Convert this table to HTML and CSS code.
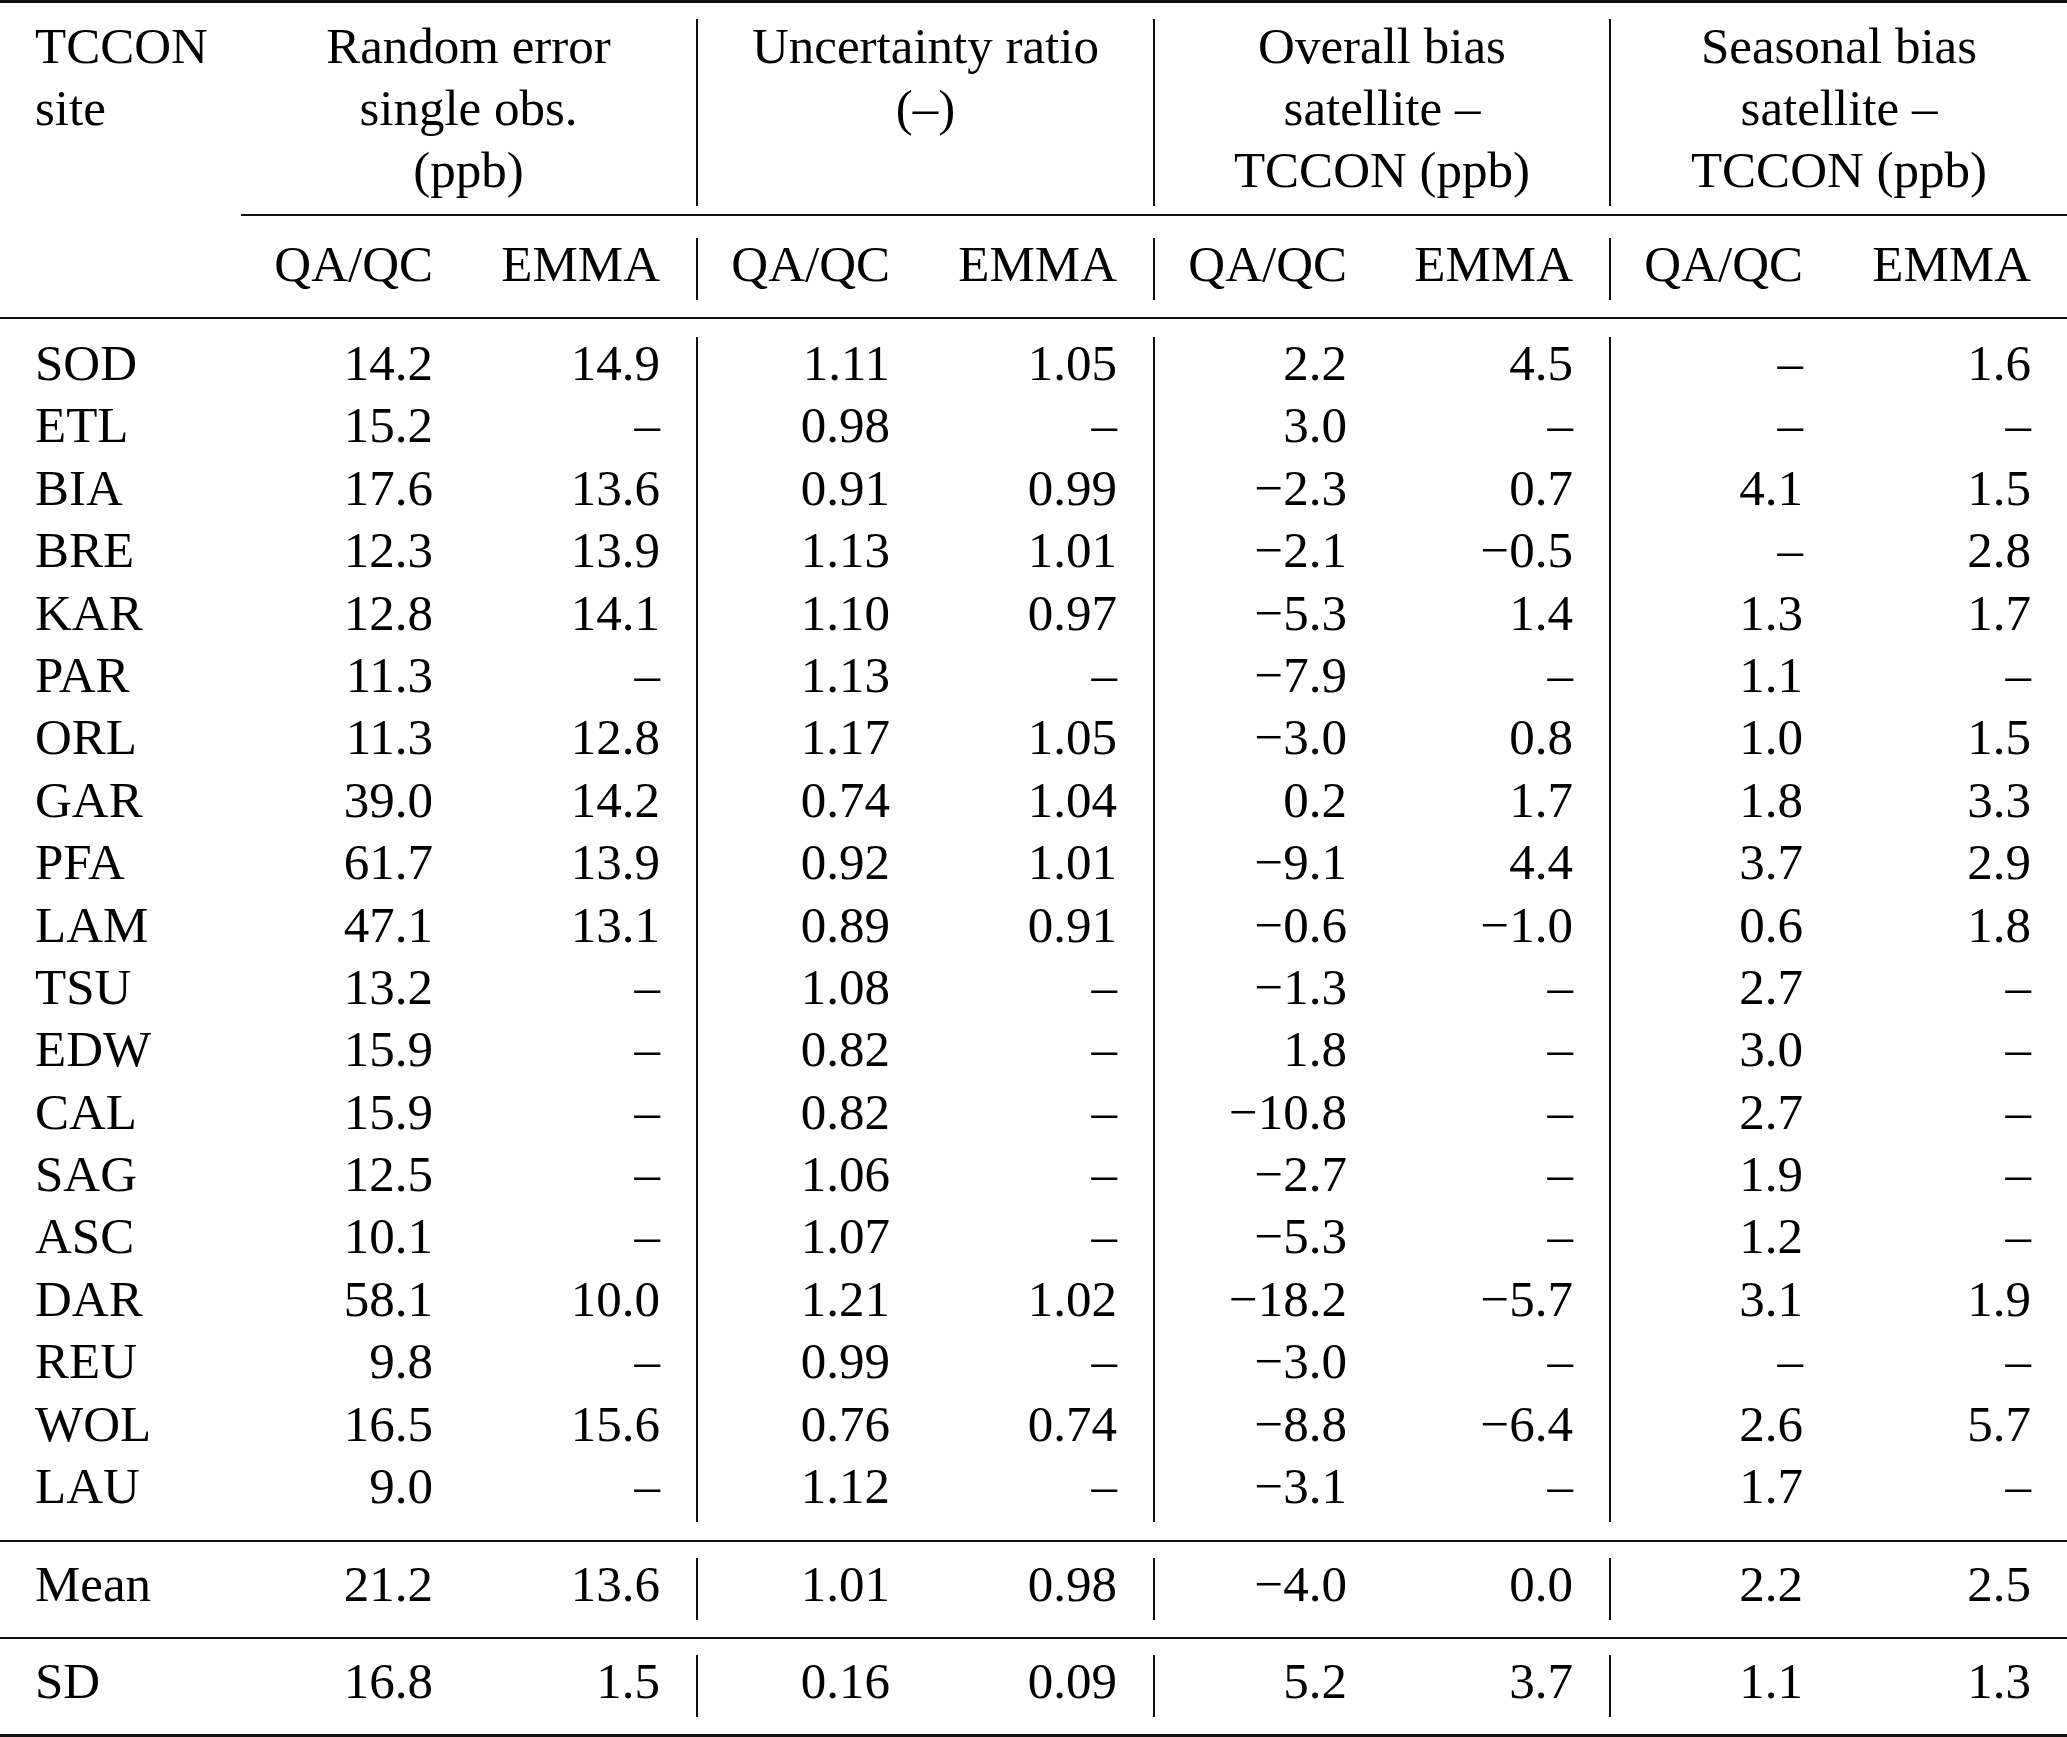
FILE: index.html
```html
<!DOCTYPE html>
<html lang="en">
<head>
<meta charset="utf-8">
<title>TCCON comparison table</title>
<link rel="stylesheet" href="styles.css">
</head>
<body>
<div class="table">
  <div class="band head">
    <div class="cell hcell site"><div class="txt">TCCON<br>site</div></div>
    <div class="cell hcell grp sep"><div class="txt">Random error<br>single obs.<br>(ppb)</div></div>
    <div class="cell hcell grp sep"><div class="txt">Uncertainty ratio<br>(–)</div></div>
    <div class="cell hcell grp sep"><div class="txt">Overall bias<br>satellite –<br>TCCON (ppb)</div></div>
    <div class="cell hcell grp"><div class="txt">Seasonal bias<br>satellite –<br>TCCON (ppb)</div></div>
  </div>
  <div class="cmid"></div>
  <div class="band sub">
    <div class="cell site"></div>
    <div class="cell num">QA/QC</div><div class="cell num sep">EMMA</div>
    <div class="cell num">QA/QC</div><div class="cell num sep">EMMA</div>
    <div class="cell num">QA/QC</div><div class="cell num sep">EMMA</div>
    <div class="cell num">QA/QC</div><div class="cell num">EMMA</div>
  </div>
  <div class="band body">
    <div class="cell site">SOD</div><div class="cell num">14.2</div><div class="cell num sep">14.9</div><div class="cell num">1.11</div><div class="cell num sep">1.05</div><div class="cell num">2.2</div><div class="cell num sep">4.5</div><div class="cell num">–</div><div class="cell num">1.6</div>
    <div class="cell site">ETL</div><div class="cell num">15.2</div><div class="cell num sep">–</div><div class="cell num">0.98</div><div class="cell num sep">–</div><div class="cell num">3.0</div><div class="cell num sep">–</div><div class="cell num">–</div><div class="cell num">–</div>
    <div class="cell site">BIA</div><div class="cell num">17.6</div><div class="cell num sep">13.6</div><div class="cell num">0.91</div><div class="cell num sep">0.99</div><div class="cell num">−2.3</div><div class="cell num sep">0.7</div><div class="cell num">4.1</div><div class="cell num">1.5</div>
    <div class="cell site">BRE</div><div class="cell num">12.3</div><div class="cell num sep">13.9</div><div class="cell num">1.13</div><div class="cell num sep">1.01</div><div class="cell num">−2.1</div><div class="cell num sep">−0.5</div><div class="cell num">–</div><div class="cell num">2.8</div>
    <div class="cell site">KAR</div><div class="cell num">12.8</div><div class="cell num sep">14.1</div><div class="cell num">1.10</div><div class="cell num sep">0.97</div><div class="cell num">−5.3</div><div class="cell num sep">1.4</div><div class="cell num">1.3</div><div class="cell num">1.7</div>
    <div class="cell site">PAR</div><div class="cell num">11.3</div><div class="cell num sep">–</div><div class="cell num">1.13</div><div class="cell num sep">–</div><div class="cell num">−7.9</div><div class="cell num sep">–</div><div class="cell num">1.1</div><div class="cell num">–</div>
    <div class="cell site">ORL</div><div class="cell num">11.3</div><div class="cell num sep">12.8</div><div class="cell num">1.17</div><div class="cell num sep">1.05</div><div class="cell num">−3.0</div><div class="cell num sep">0.8</div><div class="cell num">1.0</div><div class="cell num">1.5</div>
    <div class="cell site">GAR</div><div class="cell num">39.0</div><div class="cell num sep">14.2</div><div class="cell num">0.74</div><div class="cell num sep">1.04</div><div class="cell num">0.2</div><div class="cell num sep">1.7</div><div class="cell num">1.8</div><div class="cell num">3.3</div>
    <div class="cell site">PFA</div><div class="cell num">61.7</div><div class="cell num sep">13.9</div><div class="cell num">0.92</div><div class="cell num sep">1.01</div><div class="cell num">−9.1</div><div class="cell num sep">4.4</div><div class="cell num">3.7</div><div class="cell num">2.9</div>
    <div class="cell site">LAM</div><div class="cell num">47.1</div><div class="cell num sep">13.1</div><div class="cell num">0.89</div><div class="cell num sep">0.91</div><div class="cell num">−0.6</div><div class="cell num sep">−1.0</div><div class="cell num">0.6</div><div class="cell num">1.8</div>
    <div class="cell site">TSU</div><div class="cell num">13.2</div><div class="cell num sep">–</div><div class="cell num">1.08</div><div class="cell num sep">–</div><div class="cell num">−1.3</div><div class="cell num sep">–</div><div class="cell num">2.7</div><div class="cell num">–</div>
    <div class="cell site">EDW</div><div class="cell num">15.9</div><div class="cell num sep">–</div><div class="cell num">0.82</div><div class="cell num sep">–</div><div class="cell num">1.8</div><div class="cell num sep">–</div><div class="cell num">3.0</div><div class="cell num">–</div>
    <div class="cell site">CAL</div><div class="cell num">15.9</div><div class="cell num sep">–</div><div class="cell num">0.82</div><div class="cell num sep">–</div><div class="cell num">−10.8</div><div class="cell num sep">–</div><div class="cell num">2.7</div><div class="cell num">–</div>
    <div class="cell site">SAG</div><div class="cell num">12.5</div><div class="cell num sep">–</div><div class="cell num">1.06</div><div class="cell num sep">–</div><div class="cell num">−2.7</div><div class="cell num sep">–</div><div class="cell num">1.9</div><div class="cell num">–</div>
    <div class="cell site">ASC</div><div class="cell num">10.1</div><div class="cell num sep">–</div><div class="cell num">1.07</div><div class="cell num sep">–</div><div class="cell num">−5.3</div><div class="cell num sep">–</div><div class="cell num">1.2</div><div class="cell num">–</div>
    <div class="cell site">DAR</div><div class="cell num">58.1</div><div class="cell num sep">10.0</div><div class="cell num">1.21</div><div class="cell num sep">1.02</div><div class="cell num">−18.2</div><div class="cell num sep">−5.7</div><div class="cell num">3.1</div><div class="cell num">1.9</div>
    <div class="cell site">REU</div><div class="cell num">9.8</div><div class="cell num sep">–</div><div class="cell num">0.99</div><div class="cell num sep">–</div><div class="cell num">−3.0</div><div class="cell num sep">–</div><div class="cell num">–</div><div class="cell num">–</div>
    <div class="cell site">WOL</div><div class="cell num">16.5</div><div class="cell num sep">15.6</div><div class="cell num">0.76</div><div class="cell num sep">0.74</div><div class="cell num">−8.8</div><div class="cell num sep">−6.4</div><div class="cell num">2.6</div><div class="cell num">5.7</div>
    <div class="cell site">LAU</div><div class="cell num">9.0</div><div class="cell num sep">–</div><div class="cell num">1.12</div><div class="cell num sep">–</div><div class="cell num">−3.1</div><div class="cell num sep">–</div><div class="cell num">1.7</div><div class="cell num">–</div>
  </div>
  <div class="band foot">
    <div class="cell site">Mean</div><div class="cell num">21.2</div><div class="cell num sep">13.6</div><div class="cell num">1.01</div><div class="cell num sep">0.98</div><div class="cell num">−4.0</div><div class="cell num sep">0.0</div><div class="cell num">2.2</div><div class="cell num">2.5</div>
  </div>
  <div class="band foot last">
    <div class="cell site">SD</div><div class="cell num">16.8</div><div class="cell num sep">1.5</div><div class="cell num">0.16</div><div class="cell num sep">0.09</div><div class="cell num">5.2</div><div class="cell num sep">3.7</div><div class="cell num">1.1</div><div class="cell num">1.3</div>
  </div>
</div>
</body>
</html>
```

FILE: styles.css
```css
* {
  box-sizing: border-box;
  margin: 0;
  padding: 0;
}

html, body {
  background: #ffffff;
}

body {
  margin: 0;
  color: #000000;
  font-family: "Liberation Serif", "Times New Roman", serif;
  font-size: 51px;
}

.table {
  width: 2067px;
}

.band {
  display: grid;
  grid-template-columns: 241px 228px 229px 228px 229px 228px 228px 228px 228px;
}

.head {
  border-top: 3px solid #111;
  padding: 16px 0 7.8px;
}

.cmid {
  margin-left: 241px;
  border-top: 2px solid #111;
}

.sub {
  padding: 22px 0 16.6px;
}

.body {
  border-top: 2px solid #111;
  padding: 18px 0 17.4px;
}

.foot {
  border-top: 2px solid #111;
  padding: 16px 0 16.6px;
}

.last {
  border-bottom: 3px solid #111;
}

.cell {
  line-height: 53.6px;
  padding-bottom: 8.8px;
  white-space: nowrap;
}

.hcell {
  line-height: 62.4px;
  padding-bottom: 4.4px;
}

.hcell .txt {
  margin-top: -4.4px;
}

.site {
  padding-left: 35px;
  text-align: left;
}

.num {
  text-align: right;
  padding-right: 36px;
}

.grp {
  grid-column: span 2;
  text-align: center;
}

.sep {
  border-right: 2px solid #111;
}
```
